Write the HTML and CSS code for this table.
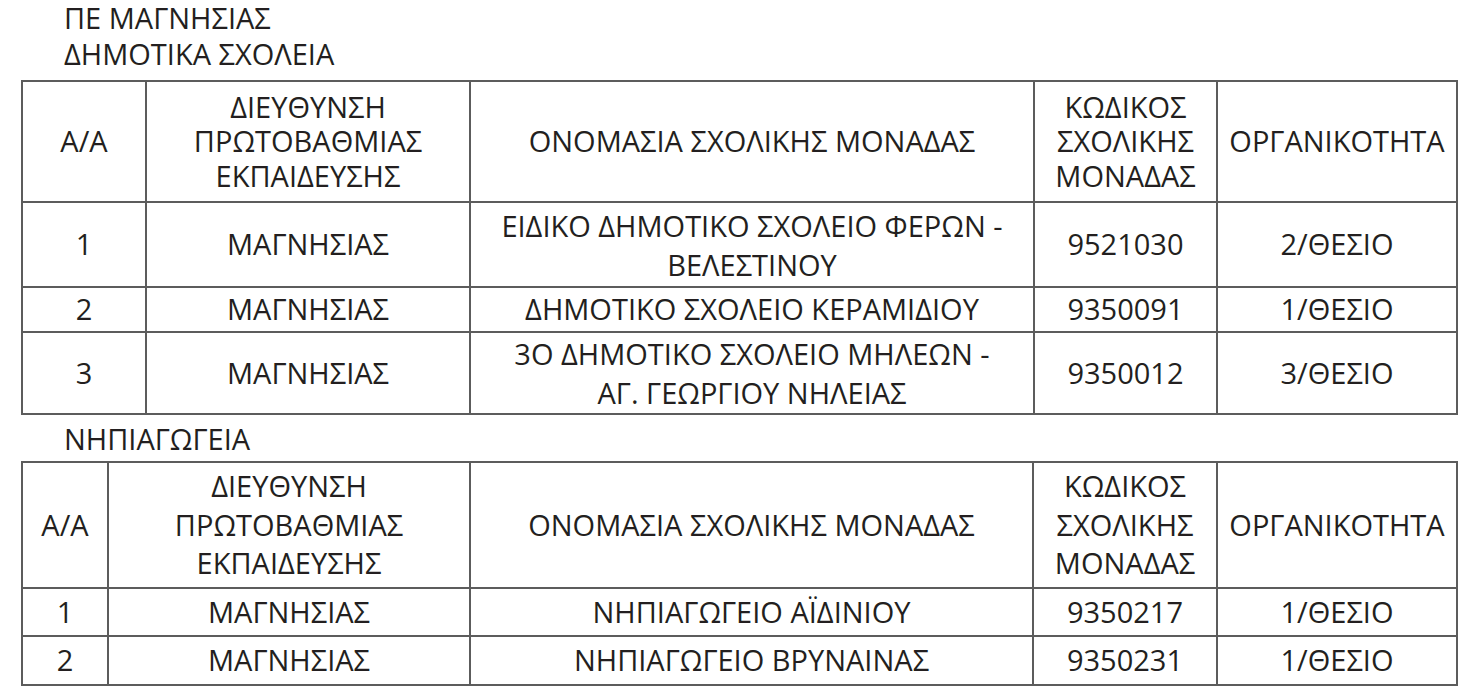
FILE: index.html
```html
<!DOCTYPE html>
<html lang="el">
<head>
<meta charset="utf-8">
<title>ΠΕ ΜΑΓΝΗΣΙΑΣ</title>
<link rel="stylesheet" href="styles.css">
</head>
<body>
<div class="heading">
  <div class="line">ΠΕ ΜΑΓΝΗΣΙΑΣ</div>
  <div class="line">ΔΗΜΟΤΙΚΑ ΣΧΟΛΕΙΑ</div>
</div>
<table class="grid grid-a">
  <colgroup>
    <col class="c-aa-a"><col class="c-dir-a"><col class="c-name-a"><col class="c-code-a"><col class="c-org">
  </colgroup>
  <tr class="head-a">
    <td>Α/Α</td>
    <td>ΔΙΕΥΘΥΝΣΗ<br>ΠΡΩΤΟΒΑΘΜΙΑΣ<br>ΕΚΠΑΙΔΕΥΣΗΣ</td>
    <td>ΟΝΟΜΑΣΙΑ ΣΧΟΛΙΚΗΣ ΜΟΝΑΔΑΣ</td>
    <td>ΚΩΔΙΚΟΣ<br>ΣΧΟΛΙΚΗΣ<br>ΜΟΝΑΔΑΣ</td>
    <td>ΟΡΓΑΝΙΚΟΤΗΤΑ</td>
  </tr>
  <tr class="r-a1">
    <td>1</td>
    <td>ΜΑΓΝΗΣΙΑΣ</td>
    <td class="multi">ΕΙΔΙΚΟ ΔΗΜΟΤΙΚΟ ΣΧΟΛΕΙΟ ΦΕΡΩΝ -<br>ΒΕΛΕΣΤΙΝΟΥ</td>
    <td>9521030</td>
    <td>2/ΘΕΣΙΟ</td>
  </tr>
  <tr class="r-a2">
    <td>2</td>
    <td>ΜΑΓΝΗΣΙΑΣ</td>
    <td>ΔΗΜΟΤΙΚΟ ΣΧΟΛΕΙΟ ΚΕΡΑΜΙΔΙΟΥ</td>
    <td>9350091</td>
    <td>1/ΘΕΣΙΟ</td>
  </tr>
  <tr class="r-a3">
    <td>3</td>
    <td>ΜΑΓΝΗΣΙΑΣ</td>
    <td class="multi">3Ο ΔΗΜΟΤΙΚΟ ΣΧΟΛΕΙΟ ΜΗΛΕΩΝ -<br>ΑΓ. ΓΕΩΡΓΙΟΥ ΝΗΛΕΙΑΣ</td>
    <td>9350012</td>
    <td>3/ΘΕΣΙΟ</td>
  </tr>
</table>
<div class="sublabel">ΝΗΠΙΑΓΩΓΕΙΑ</div>
<table class="grid grid-b">
  <colgroup>
    <col class="c-aa-b"><col class="c-dir-b"><col class="c-name-b"><col class="c-code-b"><col class="c-org">
  </colgroup>
  <tr class="head-b">
    <td>Α/Α</td>
    <td>ΔΙΕΥΘΥΝΣΗ<br>ΠΡΩΤΟΒΑΘΜΙΑΣ<br>ΕΚΠΑΙΔΕΥΣΗΣ</td>
    <td>ΟΝΟΜΑΣΙΑ ΣΧΟΛΙΚΗΣ ΜΟΝΑΔΑΣ</td>
    <td>ΚΩΔΙΚΟΣ<br>ΣΧΟΛΙΚΗΣ<br>ΜΟΝΑΔΑΣ</td>
    <td>ΟΡΓΑΝΙΚΟΤΗΤΑ</td>
  </tr>
  <tr class="r-b1">
    <td>1</td>
    <td>ΜΑΓΝΗΣΙΑΣ</td>
    <td>ΝΗΠΙΑΓΩΓΕΙΟ ΑΪΔΙΝΙΟΥ</td>
    <td>9350217</td>
    <td>1/ΘΕΣΙΟ</td>
  </tr>
  <tr class="r-b2">
    <td>2</td>
    <td>ΜΑΓΝΗΣΙΑΣ</td>
    <td>ΝΗΠΙΑΓΩΓΕΙΟ ΒΡΥΝΑΙΝΑΣ</td>
    <td>9350231</td>
    <td>1/ΘΕΣΙΟ</td>
  </tr>
</table>
</body>
</html>
```
FILE: styles.css
```css
html, body {
  margin: 0;
  padding: 0;
  background: #ffffff;
}
body {
  font-family: "Open Sans", "Noto Sans", sans-serif;
  font-size: 29px;
  color: #231f20;
}
.heading {
  padding: 0 0 0 64px;
  line-height: 36px;
}
.sublabel {
  padding-left: 64px;
  line-height: 36px;
  margin: 6px 0 4px 0;
}
.grid {
  margin-left: 21px;
  width: 1435px;
  table-layout: fixed;
  border-collapse: collapse;
}
.grid-a { margin-top: 8px; }
.grid td {
  border: 2px solid #5c5c5c;
  padding: 0;
  text-align: center;
  vertical-align: middle;
  line-height: 34.5px;
  white-space: nowrap;
}
.grid td.multi { line-height: 39px; }
.c-aa-a { width: 124px; }
.c-dir-a { width: 324px; }
.c-name-a { width: 564px; }
.c-code-a { width: 183px; }
.c-org { width: 240px; }
.c-aa-b { width: 86px; }
.c-dir-b { width: 362px; }
.c-name-b { width: 563px; }
.c-code-b { width: 184px; }
.head-a td { height: 119px; }
.r-a1 td { height: 83px; }
.r-a2 td { height: 43px; }
.r-a3 td { height: 80px; }
.head-b td { height: 124px; line-height: 38.5px; }
.r-b1 td { height: 46px; }
.r-b2 td { height: 47px; }
```
